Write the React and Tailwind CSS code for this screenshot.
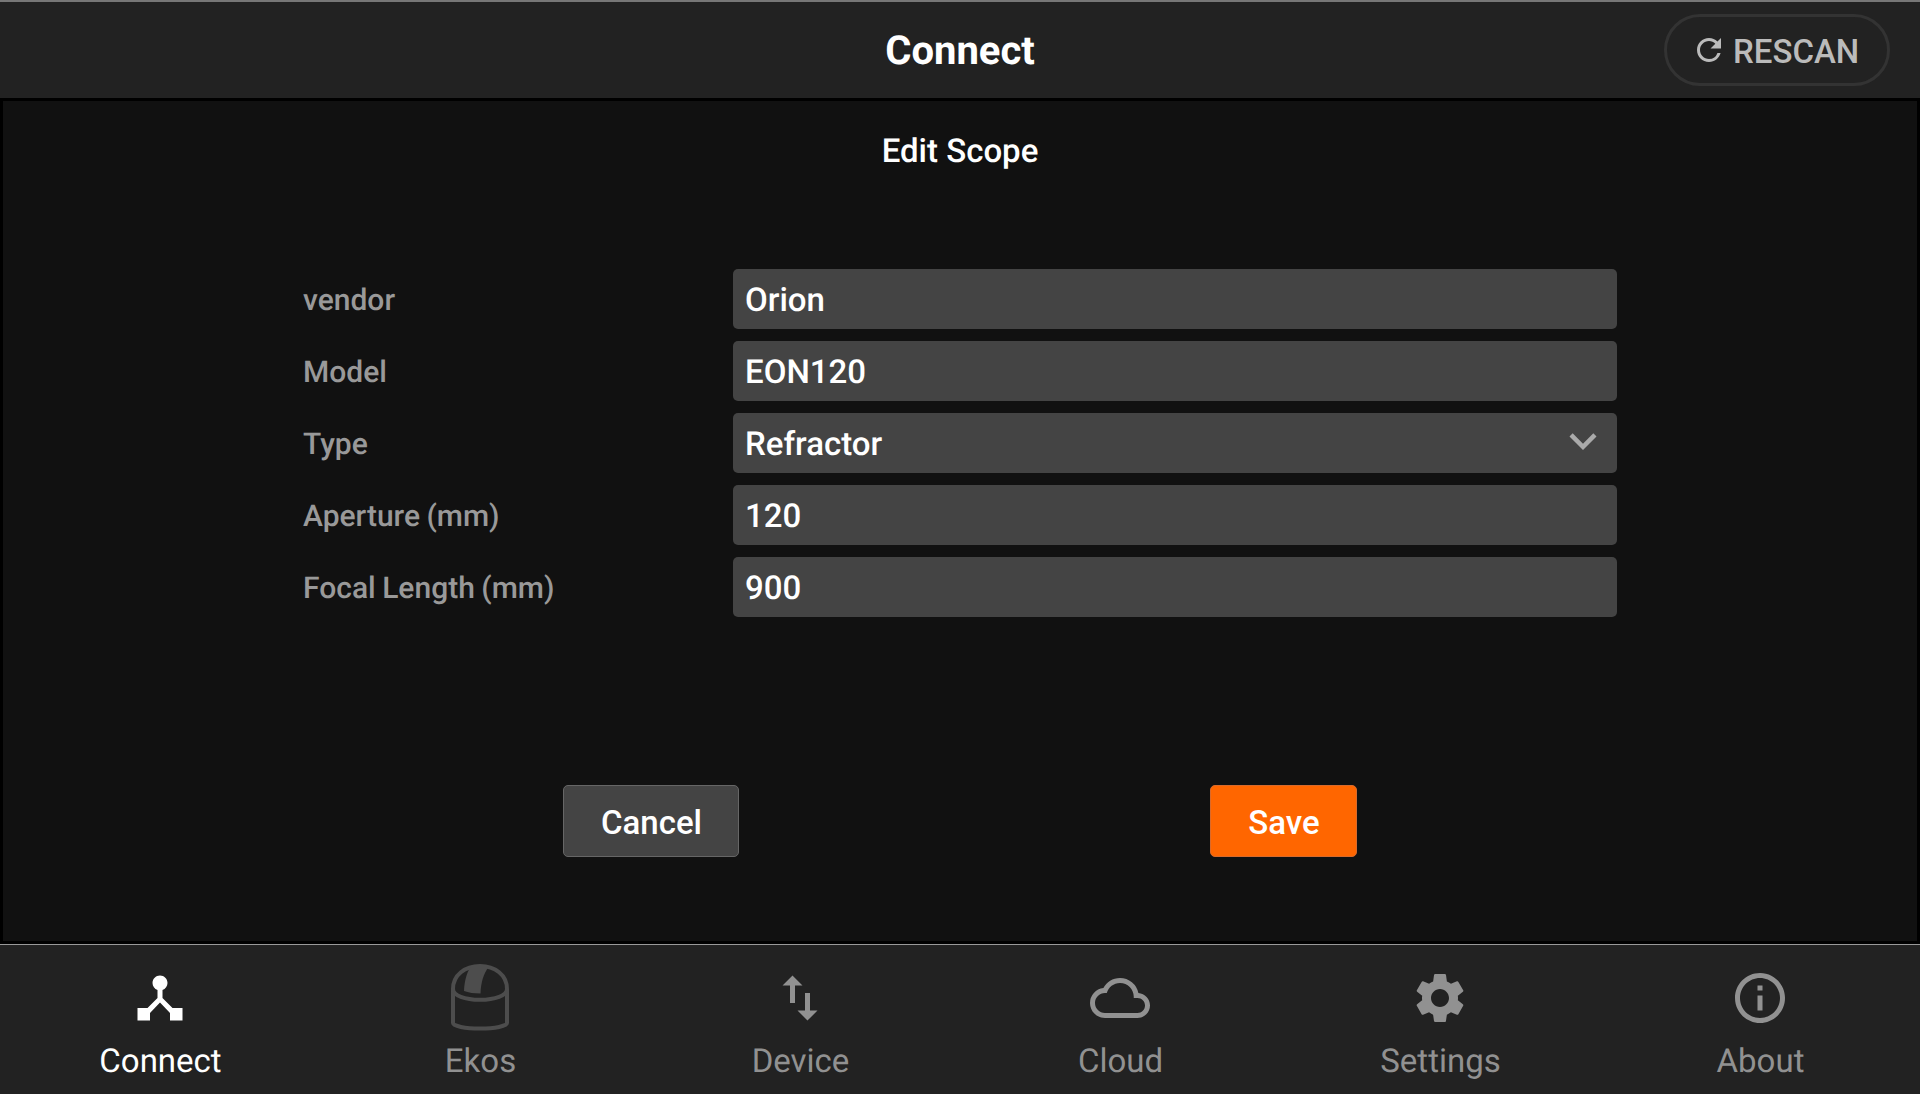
import React from 'react';
import {
  MdRefresh,
  MdDeviceHub,
  MdSwapVert,
  MdCloudQueue,
  MdSettings,
  MdInfoOutline,
  MdExpandMore,
} from 'react-icons/md';

function DomeIcon() {
  return (
    <svg
      viewBox="0 0 60 68"
      className="mb-[3px] h-[68px] w-[60px] text-[#4d4d4d]"
      fill="none"
      stroke="currentColor"
      strokeWidth="4"
    >
      <path d="M3 26C3 12 15 3 30 3S57 12 57 26V60C57 63 45 65.600 30 65.600S3 63 3 60Z" />
      <path d="M3 26C3 32.500 15 36.800 30 36.800S57 32.500 57 26" />
      <path
        d="M20.500 4H38.500C33.500 11 31 19 30.500 30.500C24 30.500 18.500 29.700 14 28C14.500 18 16.500 10.500 20.500 4Z"
        fill="currentColor"
        stroke="none"
      />
    </svg>
  );
}

const fields = [
  { label: 'vendor', value: 'Orion' },
  { label: 'Model', value: 'EON120' },
  { label: 'Type', value: 'Refractor', select: true },
  { label: 'Aperture (mm)', value: '120' },
  { label: 'Focal Length (mm)', value: '900' },
];

const tabs = [
  { label: 'Connect', icon: <MdDeviceHub size={60} />, active: true },
  { label: 'Ekos', icon: <DomeIcon /> },
  { label: 'Device', icon: <MdSwapVert size={60} /> },
  { label: 'Cloud', icon: <MdCloudQueue size={60} /> },
  { label: 'Settings', icon: <MdSettings size={60} /> },
  { label: 'About', icon: <MdInfoOutline size={60} /> },
];

export default function App() {
  return (
    <div className="flex h-[1094px] w-[1920px] flex-col overflow-hidden bg-black font-['Roboto',sans-serif] text-white [text-rendering:geometricPrecision]">
      <header className="grid h-[98px] grid-cols-[1fr_auto_1fr] items-center border-t-2 border-[#777] bg-[#222] pr-[30px]">
        <span />
        <h1 className="pt-[2px] pl-[30px] text-[40px] leading-[48px] font-bold">Connect</h1>
        <button className="flex h-[72px] w-[226px] items-center justify-self-end rounded-full border-3 border-[#333] pl-[24px] text-[33px] font-medium text-[#bbb]">
          <MdRefresh size={36} />
          <span className="ml-[6px] pt-[3px]">RESCAN</span>
        </button>
      </header>

      <main className="mx-[3px] mt-[3px] flex h-[840px] flex-col bg-[#111] px-[300px]">
        <h2 className="mt-[31px] text-center text-[33px] leading-[40px] font-medium">Edit Scope</h2>
        <div className="mt-[97px] flex flex-col gap-3">
          {fields.map((f) => (
            <div key={f.label} className="flex h-[60px] items-center">
              <span className="w-[430px] pt-[3px] text-[30px] font-medium text-[#999] [word-spacing:-1px]">{f.label}</span>
              <div className="flex h-full flex-1 items-center justify-between rounded-[5px] bg-[#444] pr-[7px] pl-3 text-[33px] font-medium">
                <span className="pt-[4px]">{f.value}</span>
                {f.select && <MdExpandMore size={54} className="mb-[4px] text-[#aaa]" />}
              </div>
            </div>
          ))}
        </div>
        <div className="mt-[168px] flex justify-between px-[260px]">
          <button className="h-[72px] w-[176px] rounded-[5px] border border-[#666] bg-[#444] pt-[3px] pl-px text-[33px] font-medium">
            Cancel
          </button>
          <button className="h-[72px] w-[147px] rounded-[5px] border border-[#d96a2b] bg-[#f60] pt-[3px] pl-px text-[33px] font-medium">
            Save
          </button>
        </div>
      </main>

      <nav className="mt-[3px] grid h-[150px] grid-cols-6 border-t border-[#999] bg-[#222]">
        {tabs.map((t) => (
          <div
            key={t.label}
            className={t.active ? 'flex flex-col items-center text-white' : 'flex flex-col items-center text-[#919191]'}
          >
            <div className="mt-[18px] flex h-[70px] items-center">{t.icon}</div>
            <span className="mt-[9px] pl-px text-[33px] leading-[40px]">{t.label}</span>
          </div>
        ))}
      </nav>
    </div>
  );
}
